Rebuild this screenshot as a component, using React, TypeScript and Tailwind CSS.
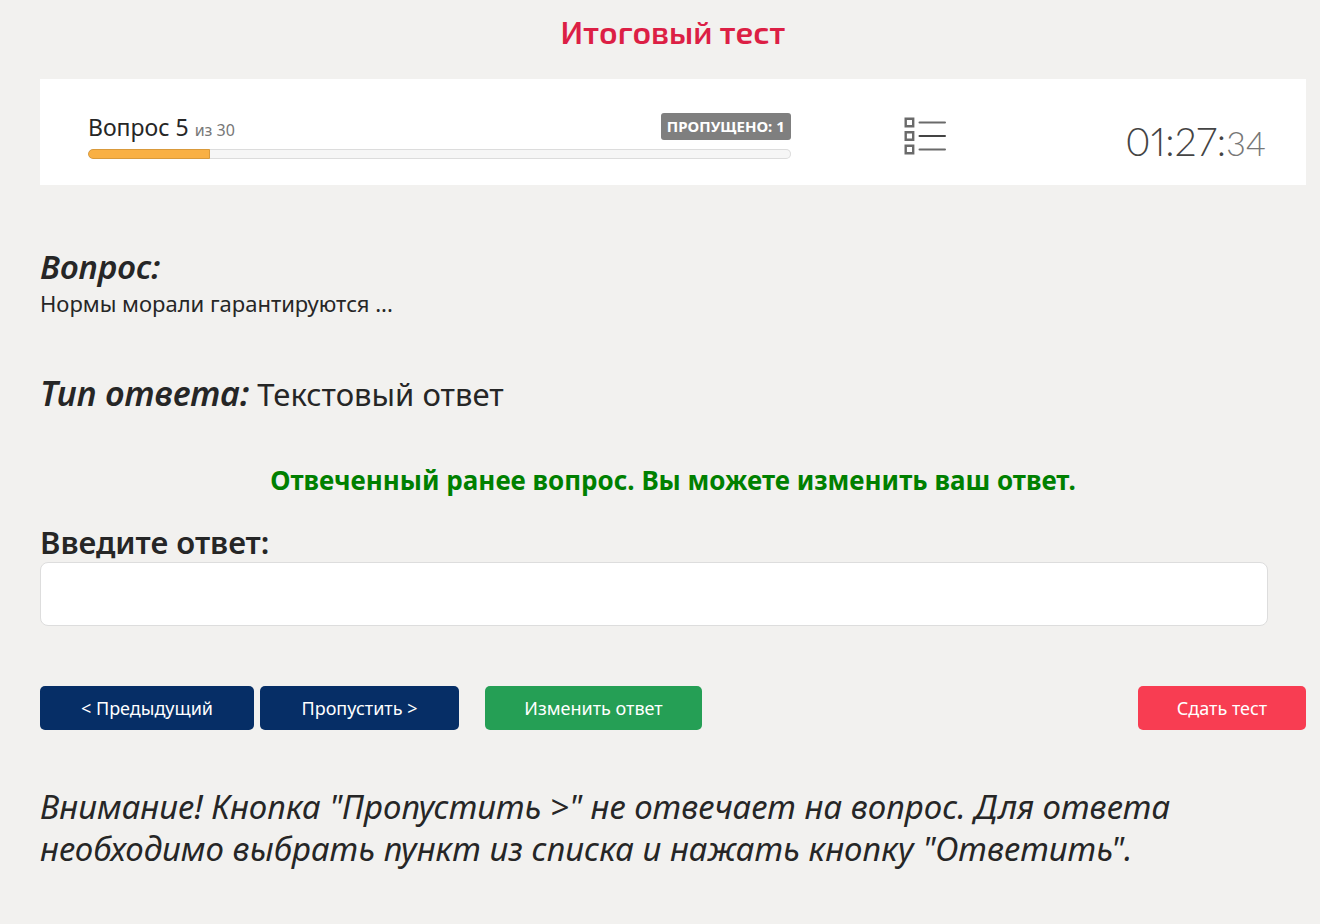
import React from "react";

const App = () => {
  const progress = 17.3;
  const actionButton =
    "h-11 rounded-[5px] text-lg text-white flex items-center justify-center";

  return (
    <div className="min-h-screen bg-[#f2f1ef] pl-10 pr-3.5 pt-[13px] pb-12 font-['Noto_Sans',sans-serif] text-[#262626]">
      <h1 className="text-center text-[32px] leading-9 font-semibold text-[#dc1f45] font-['Exo_2','Noto_Sans',sans-serif]">
        Итоговый тест
      </h1>

      <section className="mt-[30px] flex h-[106px] items-start bg-white pt-[34px] pl-12 pr-10">
        <div className="w-3/5 pr-1">
          <div className="flex items-end justify-between">
            <p className="text-[23px] leading-5">
              Вопрос 5 <span className="text-base leading-5 text-[#777]">из 30</span>
            </p>
            <span className="rounded-[3px] bg-[#7f7f7f] px-1.5 text-[15px] leading-[27px] font-bold text-white">
              ПРОПУЩЕНО: 1
            </span>
          </div>
          <div className="mt-[9px] h-2.5 overflow-hidden rounded-full bg-[#f6f6f6] inset-ring inset-ring-[#dcdcdc]">
            <div
              className="h-full rounded-l-full border border-[#d99a3c] bg-[#f9b044]"
              style={{ width: `${progress}%` }}
            />
          </div>
        </div>
        <button type="button" aria-label="Список вопросов" className="mt-[3px] ml-27">
          <svg width="44" height="42" viewBox="0 0 44 42" fill="none" stroke="#6a6a6a" strokeWidth="2.4">
            <path d="M2.7 2.7h7.5v7.5H2.7zM2.7 16.2h7.5v7.5H2.7zM2.7 29.8h7.5v7.5H2.7z" />
            <path d="M16.5 6.5h25.5M16.5 33.5h25.5" strokeWidth="2" strokeLinecap="round" />
            <path d="M16.5 20h25.5" stroke="#444" strokeWidth="2" strokeLinecap="round" />
          </svg>
        </button>
        <p className="mt-2 ml-auto text-[39px] leading-10 font-light text-[#444] proportional-nums font-['Lato',sans-serif]">
          01:27:<span className="text-[34px] text-[#777]">34</span>
        </p>
      </section>

      <h2 className="mt-16 text-[33px] leading-9 font-semibold italic">Вопрос:</h2>
      <p className="mt-0.5 text-[22px] leading-8">Нормы морали гарантируются ...</p>

      <p className="mt-[54px] text-[31px] leading-10">
        <strong className="text-[34px] leading-10 font-semibold italic">Тип ответа:</strong> Текстовый ответ
      </p>

      <p className="mt-12 text-center text-[26px] leading-9 font-bold text-[#008000]">
        Отвеченный ранее вопрос. Вы можете изменить ваш ответ.
      </p>

      <form className="mt-6">
        <label htmlFor="answer" className="block text-[31px] leading-10 font-semibold">
          Введите ответ:
        </label>
        <input
          id="answer"
          type="text"
          className="block h-16 w-[97%] rounded-lg border border-[#ddd] bg-white px-4 text-2xl"
        />
        <div className="mt-15 flex">
          <button type="button" className={`${actionButton} w-[214px] bg-[#062e66]`}>&lt; Предыдущий</button>
          <button type="button" className={`${actionButton} ml-1.5 w-[199px] bg-[#062e66]`}>Пропустить &gt;</button>
          <button type="button" className={`${actionButton} ml-[26px] w-[217px] bg-[#259f55]`}>Изменить ответ</button>
          <button type="button" className={`${actionButton} ml-auto w-[168px] bg-[#f83d52]`}>Сдать тест</button>
        </div>
      </form>

      <p className="mt-14 text-[33px] leading-[42px] italic">
        Внимание! Кнопка "Пропустить &gt;" не отвечает на вопрос. Для ответа
        необходимо выбрать пункт из списка и нажать кнопку "Ответить".
      </p>
    </div>
  );
};

export default App;
